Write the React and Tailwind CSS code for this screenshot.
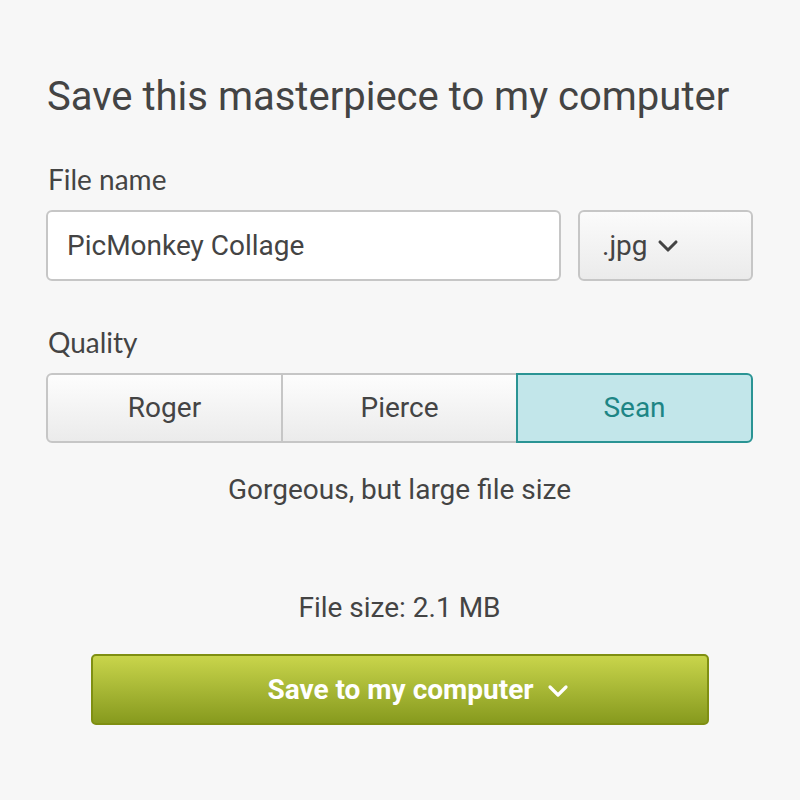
import { ChevronDown } from "lucide-react";

// quality presets shown as a segmented control
const qualities = [
  { name: "Roger", active: false },
  { name: "Pierce", active: false },
  { name: "Sean", active: true },
];

export default function App() {
  return (
    <main className="min-h-screen w-full bg-[#f7f7f7] text-[#444] font-['Roboto',sans-serif]">
      <div className="pl-[46px] pr-[47px] pt-[73px]">
        <h1 className="text-[40px] leading-[48px] ml-[1px]">
          Save this masterpiece to my computer
        </h1>

        <label className="block mt-[41px] ml-[2px] text-[28px] leading-[34px] font-['Lato',sans-serif]">
          File name
        </label>
        <div className="flex gap-[17px] mt-[14px]">
          <div className="flex-1 h-[71px] bg-white border-2 border-[#c6c6c6] rounded-[6px] flex items-center pl-[19px] text-[28px]">
            PicMonkey Collage
          </div>
          <button className="w-[175px] h-[71px] border-2 border-[#c6c6c6] rounded-[6px] bg-gradient-to-b from-[#fbfbfb] to-[#ebebeb] flex items-center pl-[22px] gap-[4px] text-[28px]">
            .jpg
            <ChevronDown size={32} strokeWidth={2.3} className="mt-[1px]" />
          </button>
        </div>

        <label className="block mt-[44px] ml-[2px] text-[28px] leading-[34px] font-['Lato',sans-serif]">
          Quality
        </label>
        <div className="flex mt-[14px] h-[70px]">
          {qualities.map((q, i) => (
            <button
              key={q.name}
              className={`flex-1 flex items-center justify-center text-[28px] border-2 ${
                q.active
                  ? "bg-[#c2e6ea] border-[#2a9494] text-[#1d8585] rounded-r-[6px]"
                  : "bg-gradient-to-b from-[#fdfdfd] to-[#ebebeb] border-[#c6c6c6]"
              } ${i === 0 ? "rounded-l-[6px]" : ""} ${i === 1 ? "border-l-0 border-r-0" : ""}`}
            >
              {q.name}
            </button>
          ))}
        </div>

        <p className="text-center text-[28px] mt-[30px] leading-[34px]">
          Gorgeous, but large file size
        </p>

        <p className="text-center text-[28px] mt-[84px] leading-[34px]">
          File size: 2.1 MB
        </p>

        <div className="flex justify-center mt-[29px]">
          <button className="w-[618px] h-[71px] rounded-[5px] border-2 border-[#7f8f12] bg-gradient-to-b from-[#c9d54b] to-[#879a1d] flex items-center justify-center pl-[42px] gap-[8px] text-white text-[28px] font-bold">
            Save to my computer
            <ChevronDown size={32} strokeWidth={2.4} className="mt-[2px]" />
          </button>
        </div>
      </div>
    </main>
  );
}
